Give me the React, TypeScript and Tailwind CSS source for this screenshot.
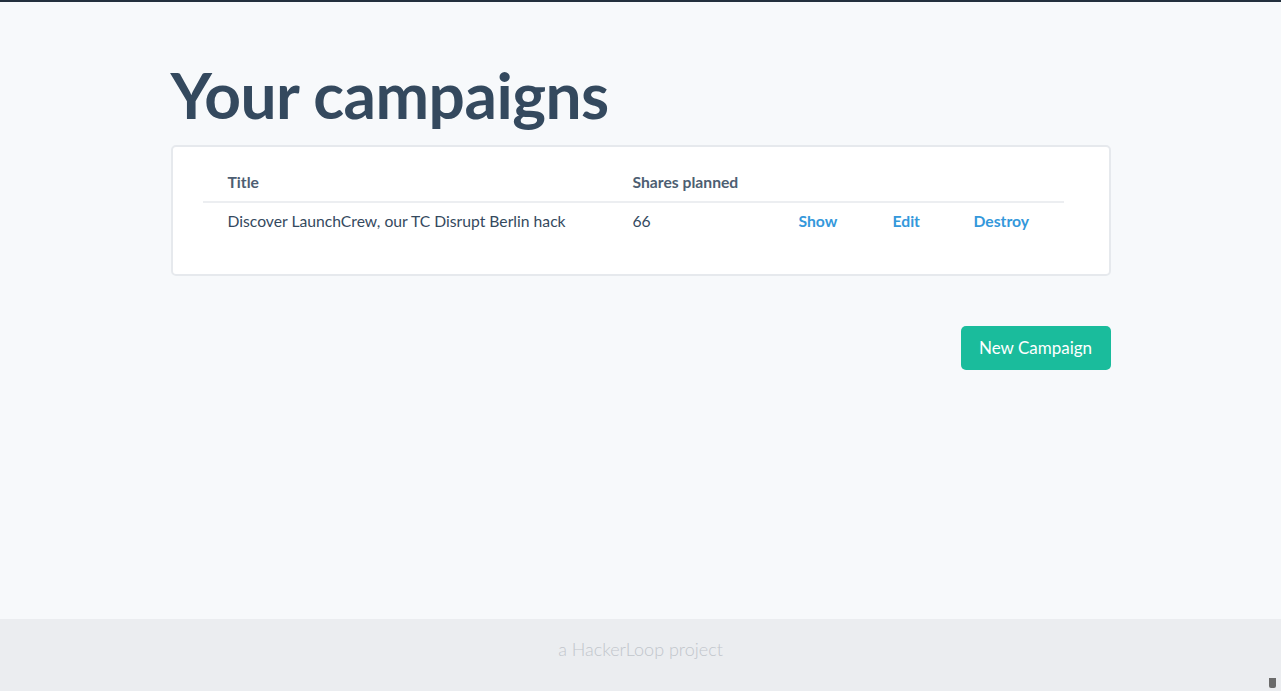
export default function App() {
  return (
    <div className="relative flex min-h-screen flex-col border-t-2 border-[#23303d] bg-[#f7f9fb] font-['Lato',sans-serif] text-[#34495e]">
      <main className="flex-1">
        <div className="mx-auto w-[940px]">
          <h1 className="mt-[61px] mb-[18px] text-[64px] font-bold leading-[64px] tracking-[-0.5px] text-[#34495e]">
            Your campaigns
          </h1>

          <div className="rounded-[5px] border-2 border-[#e6e9ed] bg-white pt-[17px] pb-[34px] pl-[30px]">
            <table className="w-[861px] table-fixed border-collapse text-[15.7px] leading-[19px]">
              <thead>
                <tr className="border-b-2 border-[#eceef1]">
                  <th className="w-[405px] px-[25px] py-[9px] text-left font-bold text-[#4d5e72]">Title</th>
                  <th className="w-[166px] px-[25px] py-[9px] text-left font-bold text-[#4d5e72]">Shares planned</th>
                  <th className="w-[94px]" />
                  <th className="w-[81px]" />
                  <th />
                </tr>
              </thead>
              <tbody>
                <tr>
                  <td className="px-[25px] py-[9px]">Discover LaunchCrew, our TC Disrupt Berlin hack</td>
                  <td className="px-[25px] py-[9px]">66</td>
                  <td className="px-[25px] py-[9px]">
                    <a href="#" className="font-bold text-[#3498db]">Show</a>
                  </td>
                  <td className="px-[25px] py-[9px]">
                    <a href="#" className="font-bold text-[#3498db]">Edit</a>
                  </td>
                  <td className="px-[25px] py-[9px]">
                    <a href="#" className="font-bold text-[#3498db]">Destroy</a>
                  </td>
                </tr>
              </tbody>
            </table>
          </div>

          <div className="mt-[50px] flex justify-end">
            <button className="h-[44px] w-[150px] rounded-[5px] bg-[#1abc9c] text-[17px] text-white">
              New Campaign
            </button>
          </div>
        </div>
      </main>

      <footer className="flex h-[72px] justify-center bg-[#ebedf0] pt-[18px] text-[18px] leading-[24px] font-light text-[#c2c6cc]">
        a HackerLoop project
      </footer>

      <div className="absolute right-[5px] bottom-[3px] h-[10px] w-[7px] rounded-b-[2px] bg-[#6b6b6b]" />
    </div>
  )
}
